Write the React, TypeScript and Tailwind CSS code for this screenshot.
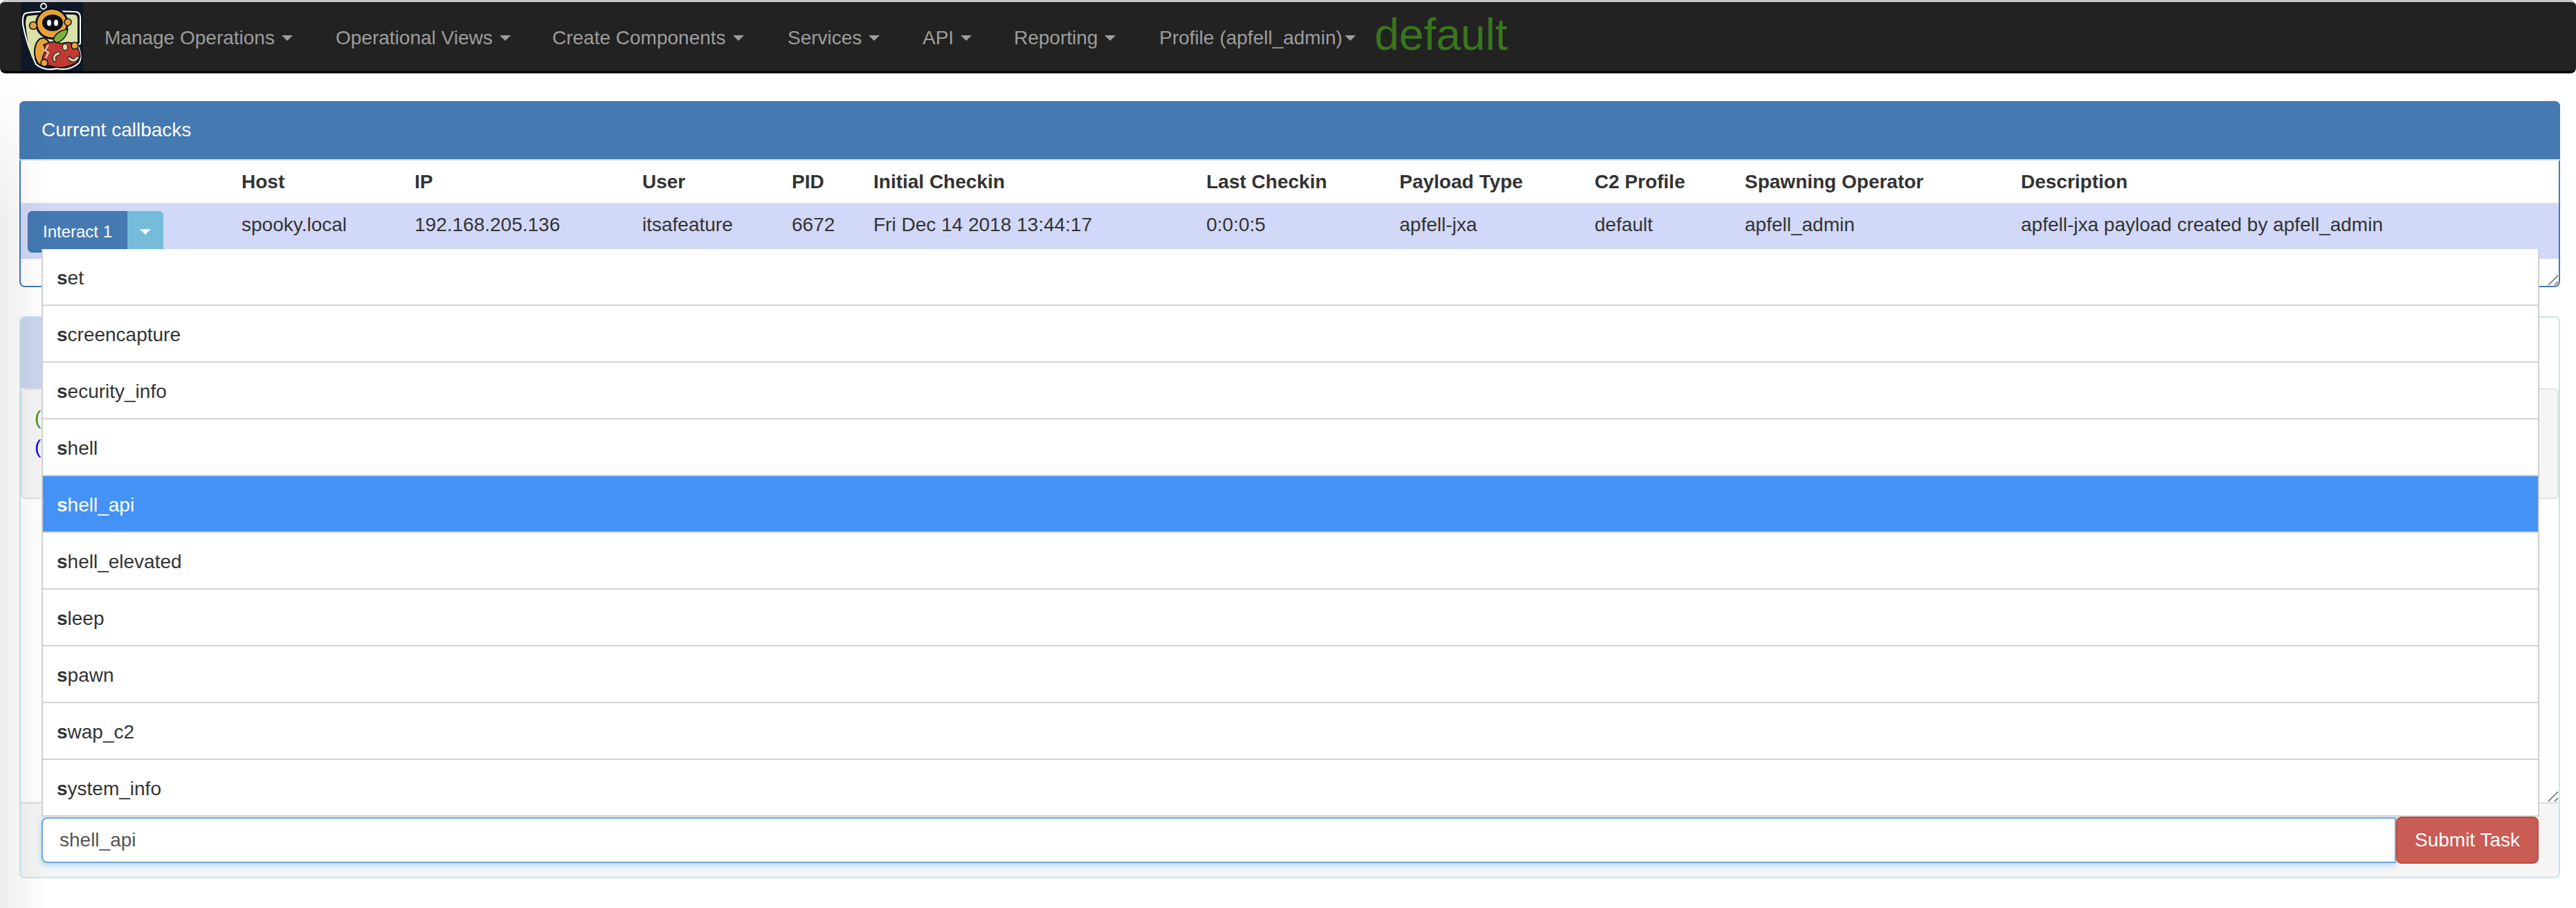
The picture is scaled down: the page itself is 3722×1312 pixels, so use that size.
const font = { fontFamily: '"Liberation Sans", Arial, sans-serif' };

const navItems = [
  { label: "Manage Operations", width: "w-[334px]" },
  { label: "Operational Views", width: "w-[313px]" },
  { label: "Create Components", width: "w-[340px]" },
  { label: "Services", width: "w-[195px]" },
  { label: "API", width: "w-[132px]" },
  { label: "Reporting", width: "w-[210px]" },
];

const headers = ["", "Host", "IP", "User", "PID", "Initial Checkin", "Last Checkin", "Payload Type", "C2 Profile", "Spawning Operator", "Description"];
const colWidths = ["w-[309px]", "w-[250px]", "w-[329px]", "w-[216px]", "w-[118px]", "w-[481px]", "w-[279px]", "w-[282px]", "w-[217px]", "w-[399px]", "w-auto"];
const cells = ["spooky.local", "192.168.205.136", "itsafeature", "6672", "Fri Dec 14 2018 13:44:17", "0:0:0:5", "apfell-jxa", "default", "apfell_admin", "apfell-jxa payload created by apfell_admin"];
const commands = ["set", "screencapture", "security_info", "shell", "shell_api", "shell_elevated", "sleep", "spawn", "swap_c2", "system_info"];

function Caret({ className }: { className: string }) {
  return <span className={"inline-block w-0 h-0 border-x-[8px] border-x-transparent border-t-[8px] " + className}></span>;
}

function Logo() {
  return (
    <svg viewBox="0 0 90 100" className="w-[90px] h-[100px] shrink-0 bg-[#0f1826]">
      <circle cx="33" cy="6" r="4" fill="none" stroke="#fff" strokeWidth="1.8" />
      <path d="M33 10 L33 15" stroke="#fff" strokeWidth="1.8" />
      <path d="M7 16 Q30 12 78 14 Q86 14 86 22 L86 60 L82 62 Q90 80 84 88 Q70 100 52 96 Q34 100 22 90 Q8 60 3 32 Q2 18 7 16Z" fill="#0b0f18" stroke="#fff" strokeWidth="2" />
      <path d="M10 20 Q32 17 76 18 Q82 18 82 24 L82 58 L60 60 L30 85 L16 80 Q9 55 7 32 Q7 22 10 20Z" fill="#d8e2a8" />
      <ellipse cx="45" cy="31" rx="24" ry="23" fill="#0b0f18" />
      <ellipse cx="45" cy="31" rx="21" ry="20" fill="#e9a23b" />
      <ellipse cx="46" cy="30" rx="15" ry="12" fill="#0b0f18" />
      <ellipse cx="41" cy="30" rx="3" ry="4.5" fill="#fff" />
      <ellipse cx="51" cy="30" rx="3" ry="4.5" fill="#fff" />
      <circle cx="18" cy="34" r="5.5" fill="#e9a23b" stroke="#0b0f18" strokeWidth="1.5" />
      <circle cx="68" cy="29" r="5" fill="#e9a23b" stroke="#0b0f18" strokeWidth="1.5" />
      <ellipse cx="32" cy="72" rx="12" ry="20" fill="#e9a23b" stroke="#0b0f18" strokeWidth="2" />
      <path d="M33 62 Q46 54 58 60 Q78 54 84 70 Q90 84 76 90 Q60 98 42 92 Q28 88 32 78 Q38 70 33 62Z" fill="#bf3a32" stroke="#0b0f18" strokeWidth="1.5" />
      <path d="M47 55 Q50 42 68 39 Q66 54 52 59Z" fill="#7bb33e" stroke="#0b0f18" strokeWidth="1.5" />
      <circle cx="78" cy="63" r="5" fill="#e9a23b" stroke="#0b0f18" strokeWidth="1.5" />
      <circle cx="34" cy="88" r="5" fill="#e9a23b" stroke="#0b0f18" strokeWidth="1.5" />
      <ellipse cx="64" cy="65" rx="3.5" ry="4.5" fill="#d8e2a8" stroke="#0b0f18" />
      <path d="M49 84 Q46 77 55 74" fill="none" stroke="#0b0f18" strokeWidth="5" strokeLinecap="round" />
      <path d="M49 84 Q46 77 55 74" fill="none" stroke="#d8e2a8" strokeWidth="3" strokeLinecap="round" />
      <path d="M70 81 Q76 88 82 80" fill="none" stroke="#0b0f18" strokeWidth="5" strokeLinecap="round" />
      <path d="M70 81 Q76 88 82 80" fill="none" stroke="#d8e2a8" strokeWidth="3" strokeLinecap="round" />
      <path d="M40 62 L35 70 L40 73 L36 81" fill="none" stroke="#e8dfc0" strokeWidth="2" />
    </svg>
  );
}

function ResizeHandle() {
  return (
    <svg viewBox="0 0 16 16" className="absolute right-0 bottom-0 w-4 h-4">
      <path d="M1 15 L15 1 M10 15 L15 10" stroke="#666" strokeWidth="1.5" fill="none" />
    </svg>
  );
}

function Navbar() {
  return (
    <nav className="h-[106px] shrink-0 flex items-center pl-[30px] bg-[#222222] border-t-[3px] border-t-[#c8c8c8] border-b-[3px] border-b-black rounded-[8px] text-[28px] text-[#9d9d9d]">
      <Logo />
      <div className="flex items-center ml-[31px] mt-[4px]">
        {navItems.map((item) => (
          <div key={item.label} className={"flex items-center shrink-0 " + item.width}>
            <span>{item.label}</span>
            <Caret className="ml-[10px] border-t-[#9d9d9d]" />
          </div>
        ))}
        <div className="flex items-center w-[311px] shrink-0">
          <span>Profile (apfell_admin)</span>
          <Caret className="ml-[3px] border-t-[#9d9d9d]" />
        </div>
        <span className="text-[64px] leading-none text-[#38761d] -mt-[11px]">default</span>
      </div>
    </nav>
  );
}

function CallbacksPanel() {
  return (
    <section className="relative h-[269px] mt-[40px] ml-[28px] mr-[23px] bg-white border-x-2 border-b-2 border-[#447ab4] rounded-[8px]">
      <div className="h-[84px] -mx-[2px] flex items-center pl-[32px] bg-[#4579b2] text-white rounded-t-[8px] border-b-2 border-[#dddddd] box-content -mb-[2px]">
        Current callbacks
      </div>
      <table className="w-full table-fixed border-collapse mt-[2px]">
        <colgroup>
          {colWidths.map((w, i) => (
            <col key={i} className={w} />
          ))}
        </colgroup>
        <thead>
          <tr className="h-[62px] border-b-2 border-[#dddddd]">
            {headers.map((h, i) => (
              <th key={i} className="pl-[10px] text-left font-bold align-middle whitespace-nowrap">{h}</th>
            ))}
          </tr>
        </thead>
        <tbody>
          <tr className="h-[80px] bg-[#d2d8f7]">
            <td className="pl-[10px] pt-[10px] align-top">
              <div className="flex h-[60px] w-[196px] text-white text-[24px] rounded-[6px] overflow-hidden">
                <div className="w-[144px] flex items-center justify-center bg-[#4579b2] border border-[#3f6fa4] rounded-l-[6px]">Interact 1</div>
                <div className="flex-1 flex items-center justify-center bg-[#74bcd9]">
                  <Caret className="border-t-white" />
                </div>
              </div>
            </td>
            {cells.map((c, i) => (
              <td key={i} className="pl-[10px] pt-[10px] leading-[40px] align-top whitespace-nowrap">{c}</td>
            ))}
          </tr>
        </tbody>
      </table>
      <ResizeHandle />
    </section>
  );
}

function TaskingPanel() {
  return (
    <section className="h-[812px] mt-[42px] ml-[28px] mr-[23px] flex flex-col bg-white border-2 border-[#c2e6f1] rounded-[8px]">
      <div className="h-[102px] shrink-0 flex items-center">
        <div className="h-full w-[90%] bg-[#ccd5f0] rounded-tl-[6px]"></div>
      </div>
      <div className="h-[160px] shrink-0 bg-[#f5f5f5] border-2 border-[#e3e3e3] rounded-[6px] pt-[20px] pl-[18px] leading-[42px]">
        {/* rest of these two lines sits behind the open menu */}
        <div className="w-[10px] overflow-hidden whitespace-nowrap text-[#3c8c1c]">(apfell_admin)</div>
        <div className="w-[10px] overflow-hidden whitespace-nowrap text-[#0000ff]">(localhost)</div>
      </div>
      <div className="relative flex-1">
        <ResizeHandle />
      </div>
      <div className="h-[108px] shrink-0 flex items-center pl-[30px] pr-[29px] bg-[#f5f5f5] border-t-2 border-[#dddddd] rounded-b-[6px]">
        <div className="flex-1 h-[66px] flex items-center pl-[24px] bg-white text-[#555555] border-2 border-[#6ea8e0] rounded-l-[8px] shadow-[0_2px_10px_rgba(102,175,233,0.55)]">
          shell_api
        </div>
        <button className="w-[206px] h-[68px] bg-[#c95c54] border-2 border-[#c14a41] rounded-[8px] text-white">Submit Task</button>
      </div>
    </section>
  );
}

function CommandMenu() {
  return (
    <ul className="absolute left-[60px] top-[360px] w-[3609px] bg-white border-x-2 border-[#cfcfcf] text-[#333333]">
      {commands.map((c) => {
        const active = c === "shell_api";
        return (
          <li
            key={c}
            className={
              "h-[82px] flex items-center pl-[20px] pt-[3px] border-b-2 border-[#d3d3d3] " +
              (active ? "bg-[#4492f6] text-white" : "bg-white")
            }
          >
            <span><b>s</b>{c.slice(1)}</span>
          </li>
        );
      })}
    </ul>
  );
}

export default function App() {
  return (
    <div style={font} className="relative w-[3722px] h-[1312px] overflow-hidden flex flex-col bg-white text-[28px] text-[#333333]">
      <Navbar />
      <CallbacksPanel />
      <TaskingPanel />
      <div className="absolute left-0 top-[106px] bottom-0 w-[70px] pointer-events-none bg-gradient-to-r from-black/[0.07] to-transparent [mask-image:linear-gradient(to_bottom,transparent,black_220px)]"></div>
      <CommandMenu />
    </div>
  );
}
